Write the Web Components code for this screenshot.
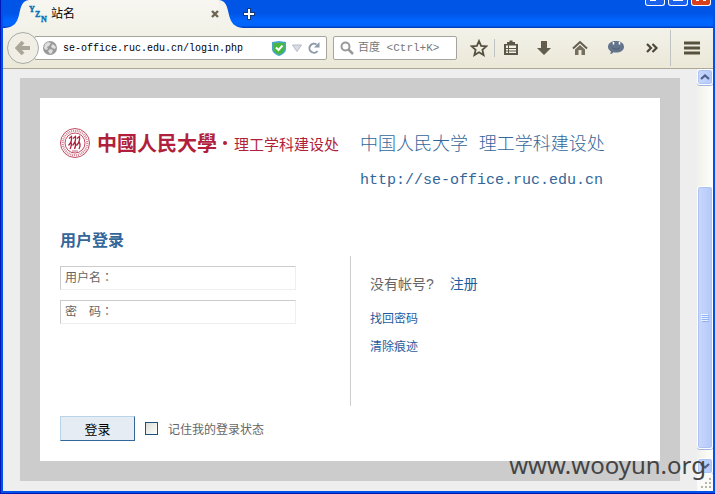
<!DOCTYPE html>
<html lang="zh-CN">
<head>
<meta charset="utf-8">
<title>站名</title>
<style>
  body {
    margin: 0;
    font-family: "Liberation Sans", "Noto Sans CJK SC", sans-serif;
    font-size: 12px;
    color: #666;
  }
</style>
</head>
<body>
<app-window>
  <tab-strip slot="tabs">站名</tab-strip>
  <nav-toolbar slot="toolbar" address="se-office.ruc.edu.cn/login.php"></nav-toolbar>
  <login-page>
    <site-brand slot="brand"></site-brand>
    <login-form></login-form>
  </login-page>
  <scroll-bar slot="scroll"></scroll-bar>
  <water-mark slot="mark">www.wooyun.org</water-mark>
</app-window>

<script>
// window frame
class AppWindow extends HTMLElement {
  constructor() {
    super();
    this.attachShadow({ mode: "open" });
    this.shadowRoot.innerHTML = `
      <style>
        :host {
          display: flex;
          flex-direction: column;
          box-sizing: border-box;
          position: relative;
          min-height: 100vh;
          padding: 0 2px 3px 3px;
          background: #0050ea;
          box-shadow: inset 1px -1px 0 #0018b4;
        }
        .view {
          flex: 1;
          display: flex;
          background: #eee;
        }
        .page { flex: 1; min-width: 0; }
      </style>
      <slot name="tabs"></slot>
      <slot name="toolbar"></slot>
      <div class="view">
        <div class="page"><slot></slot></div>
        <slot name="scroll"></slot>
      </div>
      <slot name="mark"></slot>
    `;
  }
}
customElements.define("app-window", AppWindow);

class TabStrip extends HTMLElement {
  constructor() {
    super();
    this.attachShadow({ mode: "open" });
    this.shadowRoot.innerHTML = `
      <style>
        :host {
          display: flex;
          height: 28px;
          padding-left: 2px;
          background: linear-gradient(#0054e6 0, #0054e6 45%, #0066ff 75%, #0064fa 92%, #0036b0 100%);
        }
        svg { display: block; flex: none; }
        button { border: 0; padding: 0; background: none; }
        .tab {
          display: flex;
          align-items: center;
          flex: 0 1 190px;
          background: linear-gradient(#f7f6f1, #f3f2e9);
          color: #000;
        }
        .favicon { overflow: visible; }
        .title { flex: 1; margin-left: 5px; line-height: 28px; }
        .add { align-self: center; }
        .controls {
          display: flex;
          align-items: flex-start;
          gap: 3px;
          margin-left: auto;
          padding-right: 2px;
        }
        .controls button {
          width: 20px;
          height: 6px;
          border: 1px solid #fff;
          border-top: 0;
          border-radius: 0 0 3px 3px;
          background: #1c62ea;
          overflow: hidden;
        }
        .controls .close { background: #d8401c; }
      </style>
      <svg width="24" height="28"><path d="M0 28C9 27 12 23 14 15C16 6 17 1 24 0V28Z" fill="#f4f3eb"/></svg>
      <div class="tab">
        <svg class="favicon" width="17" height="18" viewBox="0 0 17 18" fill="#0a6fb4" stroke="#0a6fb4" stroke-width=".4" font-family="Liberation Serif, serif" font-weight="bold" font-size="8">
          <text x="0" y="7">Y</text><text x="6" y="12">Z</text><text x="12" y="17">N</text>
        </svg>
        <span class="title"><slot></slot></span>
        <button aria-label="关闭标签页"><svg width="8" height="8" viewBox="0 0 8 8"><path d="M1 1L7 7M7 1L1 7" stroke="#6b6552" stroke-width="2.4"/></svg></button>
      </div>
      <svg width="24" height="28"><path d="M24 28C15 27 12 23 10 15C8 6 7 1 0 0V28Z" fill="#f4f3eb"/></svg>
      <button class="add" aria-label="新标签页"><svg width="12" height="12" viewBox="0 0 12 12"><path d="M6 0V12M0 6H12" stroke="#123a7a" stroke-width="4"/><path d="M6 1V11M1 6H11" stroke="#fff" stroke-width="2"/></svg></button>
      <div class="controls">
        <button aria-label="最小化"><svg width="18" height="5"><path d="M4 0H10V1H4Z" fill="#fff"/></svg></button>
        <button aria-label="最大化"><svg width="18" height="5"><path d="M4 0H14V1H4Z" fill="#fff"/></svg></button>
        <button class="close" aria-label="关闭"><svg width="18" height="5"><path d="M4 0H7V1H4ZM11 0H14V1H11Z" fill="#fff"/></svg></button>
      </div>
    `;
  }
}
customElements.define("tab-strip", TabStrip);

const icons = {
  star: `<path d="M9 2L11.1 6.8L16.3 7.3L12.4 10.8L13.6 16L9 13.2L4.4 16L5.6 10.8L1.7 7.3L6.9 6.8Z" fill="none" stroke="#55503f" stroke-width="1.8"/>`,
  list: `<path d="M2 5H5V3H7.500V1.500H10.500V3H13V5H16V16H2Z" fill="#5c5746"/><path d="M4 6.500H14V14H4Z" fill="#f3f2e9"/><path d="M4 9.500H14M4 12H14M6.500 6V14" stroke="#5c5746"/>`,
  down: `<path d="M6 2H12V9H16L9 16L2 9H6Z" fill="#625d4c"/>`,
  home: `<path d="M2 9.500L9 3L16 9.500" fill="none" stroke="#625d4c" stroke-width="2"/><path d="M4 10.500L9 6L14 10.500V16H10.500V11H7.500V16H4Z" fill="#756f5e"/>`,
  chat: `<path d="M9 2C14 2 17 4.500 17 8C17 11.500 13.500 13.500 9 13.500C8 13.500 7 13.400 6.500 13.200C5.500 14.500 4 15 3 15C3.700 14.200 4 13 3.700 12.200C2 11 1 9.800 1 8C1 4.500 4 2 9 2Z" fill="#64748a"/><path d="M6.500 3V5.500M12.500 3V5.500" stroke="#fff" stroke-width="1.500"/><path d="M5 8.500Q9 12 13 8.500" fill="none" stroke="#505f75"/>`,
  more: `<path d="M4 5L8 9L4 13M9.500 5L13.500 9L9.500 13" fill="none" stroke="#4c4839" stroke-width="2.2"/>`,
  menu: `<path d="M1 4H17M1 9H17M1 14H17" stroke="#57523f" stroke-width="3"/>`
};

// <tool-button icon="home" label="主页">
class ToolButton extends HTMLElement {
  connectedCallback() {
    if (this.shadowRoot) return;
    this.attachShadow({ mode: "open" });
    this.shadowRoot.innerHTML = `
      <style>
        :host { display: block; flex: 0 0 36px; }
        button {
          display: flex;
          align-items: center;
          justify-content: center;
          width: 100%;
          height: 100%;
          border: 0;
          padding: 0;
          background: none;
        }
      </style>
      <button aria-label="${this.getAttribute("label")}">
        <svg width="18" height="18" viewBox="0 0 18 18">${icons[this.getAttribute("icon")]}</svg>
      </button>
    `;
  }
}
customElements.define("tool-button", ToolButton);

class NavToolbar extends HTMLElement {
  constructor() {
    super();
    this.attachShadow({ mode: "open" });
    this.shadowRoot.innerHTML = `
      <style>
        :host {
          display: flex;
          align-items: center;
          height: 40px;
          padding-left: 4px;
          border-bottom: 1px solid #aca899;
          background: linear-gradient(#f3f2e9, #ebe8d8);
        }
        svg { display: block; flex: none; }
        .back {
          position: relative;
          box-sizing: border-box;
          flex: none;
          width: 32px;
          height: 32px;
          padding: 0 0 0 7px;
          border: 1px solid #a9aca6;
          border-radius: 50%;
          background: #f1efe5;
        }
        .box {
          display: flex;
          align-items: center;
          box-sizing: border-box;
          min-width: 0;
          height: 24px;
          border: 1px solid #a5a59e;
          border-radius: 2px;
          background: #fff;
        }
        .address {
          flex: 1;
          gap: 6px;
          margin: 0 6px 0 -5px;
          padding: 0 6px 0 8px;
        }
        .search { flex: none; width: 124px; gap: 4px; margin-right: 6px; padding: 0 6px; }
        input {
          flex: 1;
          width: 0;
          min-width: 0;
          height: 22px;
          border: 0;
          padding: 0;
          outline: 0;
          background: none;
          color: #000;
          font: 10px "Liberation Mono", "Noto Sans CJK SC", monospace;
        }
        .search input { font-size: 11px; }
        input::placeholder { color: #777; }
        .box button { border: 0; padding: 0; background: none; }
        .line { width: 1px; height: 18px; background: #c0c3c4; }
        .tall { height: 36px; }
        .narrow { flex-basis: 31px; }
        .wide { flex-basis: 42px; }
      </style>
      <button class="back" aria-label="后退">
        <svg width="16" height="16" viewBox="0 0 16 16"><path d="M8 2L2.500 8L8 14M3 8H15" fill="none" stroke="#aaa698" stroke-width="4"/></svg>
      </button>
      <div class="box address">
        <svg width="14" height="14" viewBox="0 0 14 14"><circle cx="7" cy="7" r="7" fill="#999"/><path d="M2 3L5 1L8 2L6 5L4 6L5 8L3 9L1 7ZM10 3L13 6L12 8L9 7L8 5ZM7 8L10 9L9 12L7 13L5 10Z" fill="#dedede"/></svg>
        <input class="url" aria-label="地址">
        <svg width="14" height="15" viewBox="0 0 14 15"><path d="M0 1L7 0L14 1V8C14 11 11 13.500 7 15C3 13.500 0 11 0 8Z" fill="#4aa5c8"/><path d="M1.500 2H12.500V8C12.500 10.500 10 12.500 7 13.500C4 12.500 1.500 10.500 1.500 8Z" fill="#45b83d"/><path d="M4 6.500L6.500 9L10.500 4.500" fill="none" stroke="#fff" stroke-width="2"/></svg>
        <svg width="10" height="8" viewBox="0 0 10 8"><path d="M0.500 1H9.500L5 7.500Z" fill="#d8dce4" stroke="#b4bac6"/></svg>
        <button aria-label="刷新"><svg width="12" height="12" viewBox="0 0 12 12"><path d="M8.500 2.500A4.500 4.500 0 1 0 9.500 9" fill="none" stroke="#8c9aa9" stroke-width="2"/><path d="M11.500 0V5.500H6Z" fill="#8c9aa9"/></svg></button>
      </div>
      <div class="box search">
        <svg width="14" height="14" viewBox="0 0 14 14"><circle cx="5.500" cy="5.500" r="4" fill="none" stroke="#999" stroke-width="2"/><path d="M8.500 8.500L13 13" stroke="#999" stroke-width="2.500"/></svg>
        <input placeholder="百度 &lt;Ctrl+K&gt;" aria-label="搜索">
      </div>
      <tool-button class="tall narrow" icon="star" label="收藏"></tool-button>
      <span class="line"></span>
      <tool-button class="tall narrow" icon="list" label="书签"></tool-button>
      <tool-button class="tall" icon="down" label="下载"></tool-button>
      <tool-button class="tall" icon="home" label="主页"></tool-button>
      <tool-button class="tall" icon="chat" label="聊天"></tool-button>
      <tool-button class="tall" icon="more" label="更多"></tool-button>
      <span class="line tall"></span>
      <tool-button class="tall wide" icon="menu" label="菜单"></tool-button>
    `;
  }

  connectedCallback() {
    this.shadowRoot.querySelector(".url").value = this.getAttribute("address");
  }
}
customElements.define("nav-toolbar", NavToolbar);

class ScrollBar extends HTMLElement {
  constructor() {
    super();
    this.attachShadow({ mode: "open" });
    this.shadowRoot.innerHTML = `
      <style>
        :host {
          display: flex;
          flex-direction: column;
          width: 16px;
          background: linear-gradient(90deg, #f1f0ea, #fefefb);
        }
        svg { display: block; }
        button, .thumb {
          display: flex;
          align-items: center;
          justify-content: center;
          box-sizing: border-box;
          width: 100%;
          padding: 0;
          border: 1px solid #fff;
          border-radius: 3px;
          background: linear-gradient(90deg, #c9d8fc, #b4c9f9);
          box-shadow: inset 0 0 0 1px #adc3f3, 0 1px 0 #9db6e4;
        }
        button { height: 16px; }
        .track { flex: 1; display: flex; flex-direction: column; padding-top: 1px; }
        .before { flex: 101; }
        .thumb { flex: 262; }
        .after { flex: 9; }
        .grip { height: 17px; background: #fafaf8; }
      </style>
      <button aria-label="向上滚动"><svg width="10" height="6" viewBox="0 0 10 6"><path d="M1 5L5 1.500L9 5" fill="none" stroke="#4d6185" stroke-width="2.2"/></svg></button>
      <div class="track">
        <div class="before"></div>
        <div class="thumb"><svg width="8" height="8" viewBox="0 0 8 8"><path d="M0 .5H7M0 2.500H7M0 4.500H7M0 6.500H7" stroke="#eef4fe"/><path d="M1 1.500H8M1 3.500H8M1 5.500H8M1 7.500H8" stroke="#8cb0f8"/></svg></div>
        <div class="after"></div>
      </div>
      <button aria-label="向下滚动"><svg width="10" height="6" viewBox="0 0 10 6"><path d="M1 1L5 4.500L9 1" fill="none" stroke="#4d6185" stroke-width="2.2"/></svg></button>
      <div class="grip"><svg width="16" height="17"><path d="M12 4h2v2h-2zM8 8h2v2h-2zM12 8h2v2h-2zM4 12h2v2h-2zM8 12h2v2h-2zM12 12h2v2h-2z" fill="#b8b4a3"/></svg></div>
    `;
  }
}
customElements.define("scroll-bar", ScrollBar);

class LoginPage extends HTMLElement {
  constructor() {
    super();
    this.attachShadow({ mode: "open" });
    this.shadowRoot.innerHTML = `
      <style>
        :host { display: block; padding: 9px 17px 10px; }
        main {
          border: 20px solid #ccc;
          padding: 29px 20px 20px;
          background: #fff;
        }
      </style>
      <main>
        <slot name="brand"></slot>
        <slot></slot>
      </main>
    `;
  }
}
customElements.define("login-page", LoginPage);

class SiteBrand extends HTMLElement {
  constructor() {
    super();
    this.attachShadow({ mode: "open" });
    this.shadowRoot.innerHTML = `
      <style>
        :host {
          display: grid;
          grid-template-columns: 280px 1fr;
          column-gap: 20px;
          align-items: start;
          white-space: nowrap;
        }
        .logo {
          display: flex;
          align-items: center;
          height: 32px;
          color: #b01f3c;
          font-size: 15px;
        }
        .logo svg { flex: none; margin-right: 7px; }
        .school {
          font: bold 20px/32px "Noto Sans CJK TC", sans-serif;
        }
        .dot {
          flex: none;
          width: 4px;
          height: 4px;
          margin: 0 7px 0 6px;
          border-radius: 50%;
          background: #b01f3c;
        }
        .names { color: #369; line-height: 36px; }
        .names div { height: 36px; }
        .name {
          font-family: "Liberation Mono", "Noto Sans CJK SC", monospace;
          font-size: 18px;
          font-weight: 300;
        }
        .link { font-family: "Liberation Mono", monospace; font-size: 15px; }
        a { color: inherit; text-decoration: none; }
      </style>
      <div class="logo">
        <svg width="30" height="30" viewBox="0 0 30 30" fill="none" stroke="#b01f3c">
          <circle cx="15" cy="15" r="14.500" stroke-width=".8"/>
          <circle cx="15" cy="15" r="12.200" stroke-width="2.2" stroke-dasharray="1 .9" opacity=".55"/>
          <circle cx="15" cy="15" r="10" stroke-width=".8"/>
          <path d="M9 10.500L11.500 8.500C12 12 11 15 8.500 17.500M11 14C12 16 11 19 10 21M13 10.500L15.500 8.500C16 12 15 15 12.500 17.500M15 14C16 16 15.500 19 14.500 21M17 10.500L19.500 8.500C20 12 19 15 16.500 17.500M19 14C20.500 16 20 19 19 21" stroke-width="1.3"/>
          <path d="M12 23H18" stroke-width=".7"/>
        </svg>
        <span class="school">中國人民大學</span>
        <span class="dot"></span>
        <span>理工学科建设处</span>
      </div>
      <div class="names">
        <div class="name">中国人民大学 理工学科建设处</div>
        <div class="link"><a href="#">http://se-office.ruc.edu.cn</a></div>
      </div>
    `;
  }
}
customElements.define("site-brand", SiteBrand);

// bordered text box with its label inside
class TextField extends HTMLElement {
  connectedCallback() {
    if (this.shadowRoot) return;
    this.attachShadow({ mode: "open" });
    this.shadowRoot.innerHTML = `
      <style>
        :host {
          display: flex;
          align-items: center;
          box-sizing: border-box;
          height: 24px;
          padding: 0 4px;
          border: 1px solid;
          border-color: #ccc #eee #eee #ccc;
        }
        label { line-height: 20px; }
        input {
          flex: 1;
          min-width: 0;
          height: 20px;
          border: 0;
          padding: 0;
          outline: 0;
          background: none;
          font: inherit;
          color: inherit;
        }
      </style>
      <label for="box"><slot></slot></label>
      <input id="box" type="${this.getAttribute("type") || "text"}">
    `;
  }
}
customElements.define("text-field", TextField);

class LoginForm extends HTMLElement {
  constructor() {
    super();
    this.attachShadow({ mode: "open" });
    this.shadowRoot.innerHTML = `
      <style>
        :host { display: block; }
        h2 {
          margin: 32px 0 5px;
          color: #369;
          font-size: 16px;
          line-height: 20px;
        }
        .columns {
          display: grid;
          grid-template-columns: 290px 1fr;
          min-height: 150px;
        }
        .fields { padding: 10px 54px 0 0; }
        text-field + text-field { margin-top: 10px; }
        .links {
          padding: 14px 0 0 19px;
          border-left: 1px solid #ccc;
          line-height: 28px;
        }
        .links p { margin: 0; }
        .links .join {
          display: flex;
          gap: 16px;
          margin-bottom: 7px;
          font-size: 14px;
        }
        a { color: #1f5c9e; text-decoration: none; }
        .actions {
          display: flex;
          align-items: center;
          gap: 10px;
          margin-top: 10px;
        }
        button {
          width: 75px;
          height: 25px;
          border: 1px solid;
          border-color: #b8d4e8 #369 #369 #b8d4e8;
          padding: 0;
          background: #e5ecf3;
          color: #000;
          font-family: inherit;
          font-size: 13px;
        }
        input {
          appearance: none;
          box-sizing: border-box;
          width: 13px;
          height: 13px;
          margin: 0;
          border: 1px solid #1c5180;
          background: linear-gradient(135deg, #dcdcd7, #fff);
        }
      </style>
      <form>
        <h2>用户登录</h2>
        <div class="columns">
          <div class="fields">
            <text-field>用户名<span lang="zh-TW">：</span></text-field>
            <text-field type="password">密　码<span lang="zh-TW">：</span></text-field>
          </div>
          <div class="links">
            <p class="join"><span>没有帐号?</span><a href="#">注册</a></p>
            <p><a href="#">找回密码</a></p>
            <p><a href="#">清除痕迹</a></p>
          </div>
        </div>
        <div class="actions">
          <button type="button">登录</button>
          <input type="checkbox" id="remember">
          <label for="remember">记住我的登录状态</label>
        </div>
      </form>
    `;
  }
}
customElements.define("login-form", LoginForm);

class WaterMark extends HTMLElement {
  constructor() {
    super();
    this.attachShadow({ mode: "open" });
    this.shadowRoot.innerHTML = `
      <style>
        :host {
          position: absolute;
          right: 9px;
          bottom: 12px;
          color: #444;
          font: 24px/34px "Noto Sans", sans-serif;
          pointer-events: none;
        }
      </style>
      <slot></slot>
    `;
  }
}
customElements.define("water-mark", WaterMark);
</script>
</body>
</html>
